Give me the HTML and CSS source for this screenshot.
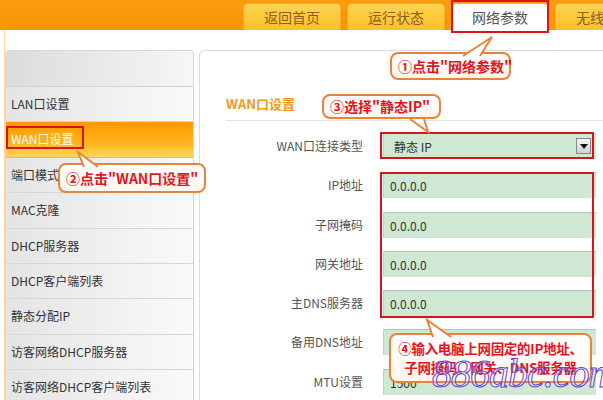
FILE: index.html
```html
<!DOCTYPE html>
<html lang="zh-CN">
<head>
    <meta charset="UTF-8">
    <meta name="viewport" content="width=device-width, initial-scale=1.0">
    <title>WAN口设置</title>
    <link rel="stylesheet" href="styles.css">
</head>
<body>
<div class="page">
    <header class="topbar">
        <nav class="tabs">
            <a class="tab">返回首页</a>
            <a class="tab">运行状态</a>
            <a class="tab active">网络参数</a>
            <a class="tab">无线设置</a>
        </nav>
    </header>

    <div class="main">
        <aside class="sidebar">
            <div class="side-head"></div>
            <a class="side-item">LAN口设置</a>
            <a class="side-item active">WAN口设置</a>
            <a class="side-item">端口模式</a>
            <a class="side-item">MAC克隆</a>
            <a class="side-item">DHCP服务器</a>
            <a class="side-item">DHCP客户端列表</a>
            <a class="side-item">静态分配IP</a>
            <a class="side-item">访客网络DHCP服务器</a>
            <a class="side-item">访客网络DHCP客户端列表</a>
        </aside>

        <section class="panel">
            <h2 class="panel-title">WAN口设置</h2>
            <div class="form">
                <label>WAN口连接类型</label>
                <div class="field select">静态 IP<span class="arrow"></span></div>
                <label>IP地址</label>
                <div class="field">0.0.0.0</div>
                <label>子网掩码</label>
                <div class="field">0.0.0.0</div>
                <label>网关地址</label>
                <div class="field">0.0.0.0</div>
                <label>主DNS服务器</label>
                <div class="field">0.0.0.0</div>
                <label>备用DNS地址</label>
                <div class="field">0.0.0.0</div>
                <label>MTU设置</label>
                <div class="field">1500</div>
            </div>
        </section>
    </div>

    <!-- annotations -->
    <div class="mark mark-tab"></div>
    <div class="mark mark-side"></div>
    <div class="mark mark-select"></div>
    <div class="mark mark-fields"></div>

    <div class="tip tip1">①点击"网络参数"
        <svg class="tail" style="left:68px;top:-19px" width="40" height="22" viewBox="0 0 40 22"><path d="M3 21 L32 2 L20 21" fill="#fff" stroke="#e9833a" stroke-width="2"/></svg>
    </div>
    <div class="tip tip2">②点击"WAN口设置"
        <svg class="tail" style="left:14px;top:-15px" width="30" height="18" viewBox="0 0 30 18"><path d="M24 17 L4 2 L10 17" fill="#fff" stroke="#e9833a" stroke-width="2"/></svg>
    </div>
    <div class="tip tip3">③选择"静态IP"
        <svg class="tail" style="left:84px;top:22px" width="30" height="16" viewBox="0 0 30 16"><path d="M2 1 L20 14 L16 1" fill="#fff" stroke="#e9833a" stroke-width="2"/></svg>
    </div>
    <div class="tip tip4">④输入电脑上网固定的IP地址、<br>子网掩码、网关、DNS服务器
        <svg class="tail" style="left:30px;top:-17px" width="34" height="20" viewBox="0 0 34 20"><path d="M12 19 L6 2 L30 19" fill="#fff" stroke="#e9833a" stroke-width="2"/></svg>
    </div>

    <div class="watermark">886abc.com</div>
</div>
</body>
</html>
```

FILE: styles.css
```css
body {
    margin: 0;
    padding: 0;
    font-family: "Noto Sans CJK SC", "Noto Sans", sans-serif;
    font-size: 12px;
    color: #444;
    background: #fff;
}

.page {
    position: relative;
    width: 603px;
    height: 400px;
    overflow: hidden;
}

/* top bar */
.topbar {
    height: 30px;
    background: linear-gradient(to bottom, #fb9b10, #f99500);
}

.tabs {
    display: flex;
    gap: 6px;
    padding: 3px 0 0 243px;
    height: 27px;
    white-space: nowrap;
}

.tab {
    flex: 0 0 98px;
    box-sizing: border-box;
    height: 27px;
    line-height: 26px;
    text-align: center;
    font-size: 14px;
    color: #8c5d1c;
    background: linear-gradient(to bottom, #fdd350, #fcc02a);
    border: 1px solid #f0ae2c;
    border-bottom: none;
    border-radius: 5px 5px 0 0;
}

.tab.active {
    background: #fff;
    color: #555;
}

/* layout */
.main {
    display: flex;
    margin-left: 4px;
    padding-top: 20px;
    border-left: 1px solid #fbd99a;
    height: 350px;
}

.sidebar {
    flex: 0 0 187px;
    border: 1px solid #d8d8d8;
    border-bottom: none;
    border-radius: 4px 4px 0 0;
    overflow: hidden;
}

.side-head {
    height: 35px;
    border-bottom: 1px solid #d2d2d2;
    background: linear-gradient(to right, #dcdcdc, #f6f6f6);
}

.side-item {
    display: block;
    height: 34.4px;
    line-height: 34px;
    padding-left: 5px;
    color: #333;
    border-bottom: 1px solid #d6d6d6;
    background: linear-gradient(to right, #e4e4e4, #fafafa);
    white-space: nowrap;
}

.side-item.active {
    color: #fff;
    background: linear-gradient(to bottom, #ff9800, #ffb41e 60%, #ffd65c);
    border-bottom-color: #f3b74a;
}

.panel {
    flex: 1;
    margin-left: 5px;
    border: 1px solid #dcdcdc;
    border-right: none;
    border-bottom: none;
    border-radius: 6px 0 0 0;
}

.panel-title {
    margin: 44px 0 0 26px;
    padding-bottom: 7px;
    font-size: 13px;
    line-height: 18px;
    color: #f39a1a;
    border-bottom: 1px solid #e2e2e2;
}

.form {
    display: grid;
    grid-template-columns: 137px 213px;
    column-gap: 20px;
    row-gap: 13.3px;
    margin: 12px 0 0 26px;
}

.form label {
    text-align: right;
    line-height: 26px;
    color: #555;
    font-size: 12px;
}

.field {
    position: relative;
    box-sizing: border-box;
    height: 26px;
    line-height: 25px;
    padding-left: 6px;
    color: #333;
    background: #cfe8d4;
    border-top: 1px solid #b5c4b8;
    border-left: 1px solid #c3d3c6;
}

.field.select {
    padding-left: 10px;
}

.arrow {
    position: absolute;
    right: 5px;
    top: 4px;
    width: 15px;
    height: 16px;
    box-sizing: border-box;
    background: linear-gradient(to bottom, #f4f4f4, #d0d0d0);
    border: 1px solid #888;
}

.arrow::after {
    content: "";
    position: absolute;
    left: 3px;
    top: 5px;
    border-left: 4px solid transparent;
    border-right: 4px solid transparent;
    border-top: 5px solid #111;
}

/* red annotation boxes */
.mark {
    position: absolute;
    box-sizing: border-box;
    border: 2px solid #d9141b;
}

.mark-tab { left: 451px; top: 0; width: 98px; height: 33px; }
.mark-side { left: 6px; top: 126px; width: 78px; height: 23px; }
.mark-select { left: 380px; top: 132px; width: 214px; height: 27px; }
.mark-fields { left: 380px; top: 172px; width: 214px; height: 146px; }

/* callouts */
.tip {
    position: absolute;
    box-sizing: border-box;
    padding: 0 6px;
    font-size: 14px;
    font-weight: bold;
    color: #e2141f;
    white-space: nowrap;
    background: linear-gradient(to bottom, #fff, #fff6ee);
    border: 2px solid #e9833a;
    border-radius: 8px;
}

.tail {
    position: absolute;
    overflow: visible;
}

.tip1 { left: 390px; top: 52px; width: 121px; height: 28px; line-height: 24px; }
.tip2 { left: 58px; top: 163px; width: 148px; height: 30px; line-height: 26px; }
.tip3 { left: 322px; top: 94px; width: 119px; height: 25px; line-height: 21px; }
.tip4 {
    left: 389px;
    top: 333px;
    width: 203px;
    height: 50px;
    padding: 4px 2px;
    font-size: 13.5px;
    letter-spacing: -0.3px;
    line-height: 19px;
    text-align: center;
}

.watermark {
    position: absolute;
    left: 432px;
    top: 352px;
    font-family: "Liberation Serif", serif;
    font-style: italic;
    font-size: 40px;
    line-height: 44px;
    letter-spacing: -1px;
    color: rgba(255, 255, 255, 0.3);
    -webkit-text-stroke: 1px #6a3fd0;
}
```
